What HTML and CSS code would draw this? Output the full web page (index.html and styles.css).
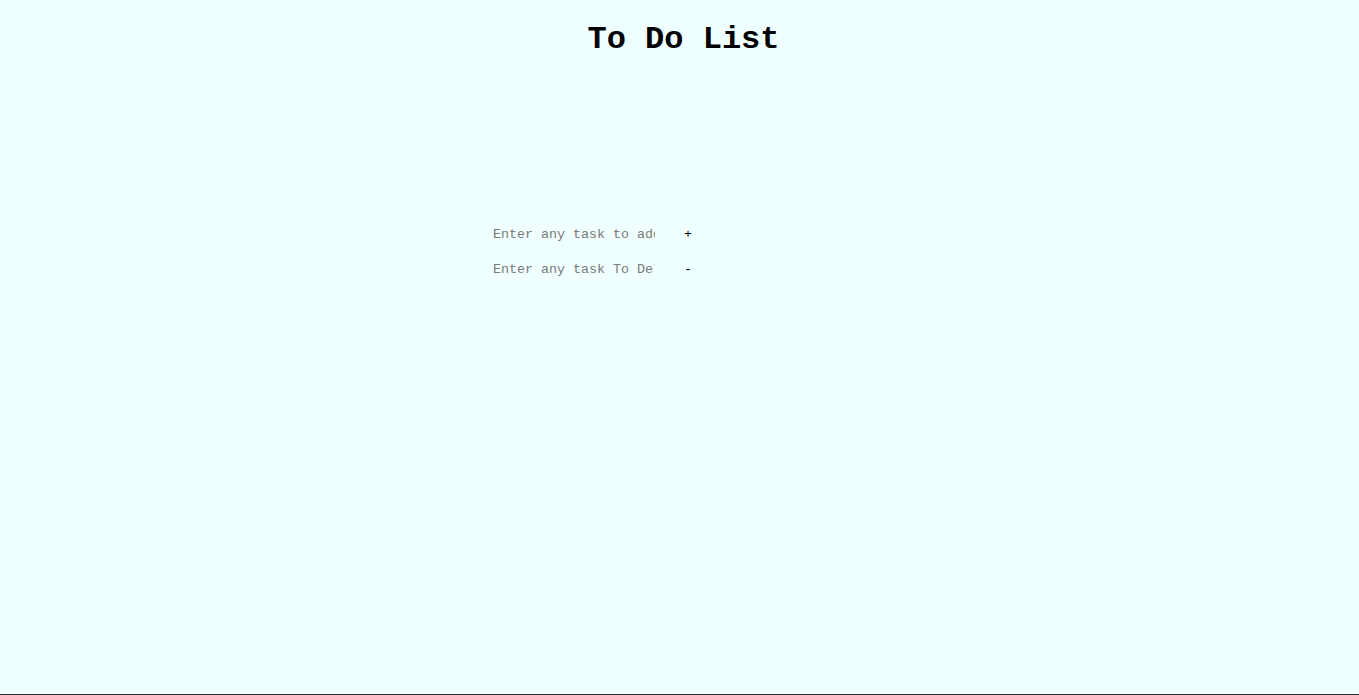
FILE: index.html
```html
<!DOCTYPE html>
<html lang="en">
<head>
<meta charset="utf-8">
<title>To Do List</title>
<link rel="stylesheet" href="styles.css">
</head>
<body>
<h1 class="title">To Do List</h1>
<main class="panel">
  <div class="row">
    <input class="task" type="text" placeholder="Enter any task to add">
    <button class="btn" type="button">+</button>
  </div>
  <div class="row">
    <input class="task" type="text" placeholder="Enter any task To Delete">
    <button class="btn" type="button">-</button>
  </div>
</main>
</body>
</html>
```
FILE: styles.css
```css
html, body {
  margin: 0;
  padding: 0;
  background: #f0ffff;
  height: 100%;
}
body {
  font-family: "Liberation Mono", "Courier New", monospace;
  color: #000;
}
body::after {
  content: "";
  position: fixed;
  left: 0;
  right: 0;
  bottom: 0;
  height: 1px;
  background: #262a2a;
}
.title {
  margin: 0;
  padding-top: 22px;
  padding-left: 8px;
  text-align: center;
  font-size: 32px;
  font-weight: bold;
  line-height: 36px;
}
.panel {
  display: flex;
  flex-direction: column;
  gap: 19px;
  padding-top: 169px;
  padding-left: 490px;
}
.row {
  display: flex;
  align-items: center;
  height: 16px;
}
.task {
  width: 162px;
  border: none;
  background: transparent;
  padding: 0 0 0 3px;
  margin: 0;
  font-family: "Liberation Mono", "Courier New", monospace;
  font-size: 13.33px;
  line-height: 16px;
  height: 16px;
  outline: none;
}
.task::placeholder {
  color: #7a7a7a;
}
.btn {
  border: none;
  background: transparent;
  margin: 0 0 0 26px;
  padding: 0 3px;
  font-family: "Liberation Mono", "Courier New", monospace;
  font-size: 13.33px;
  line-height: 16px;
  color: #000;
  cursor: pointer;
}
```
